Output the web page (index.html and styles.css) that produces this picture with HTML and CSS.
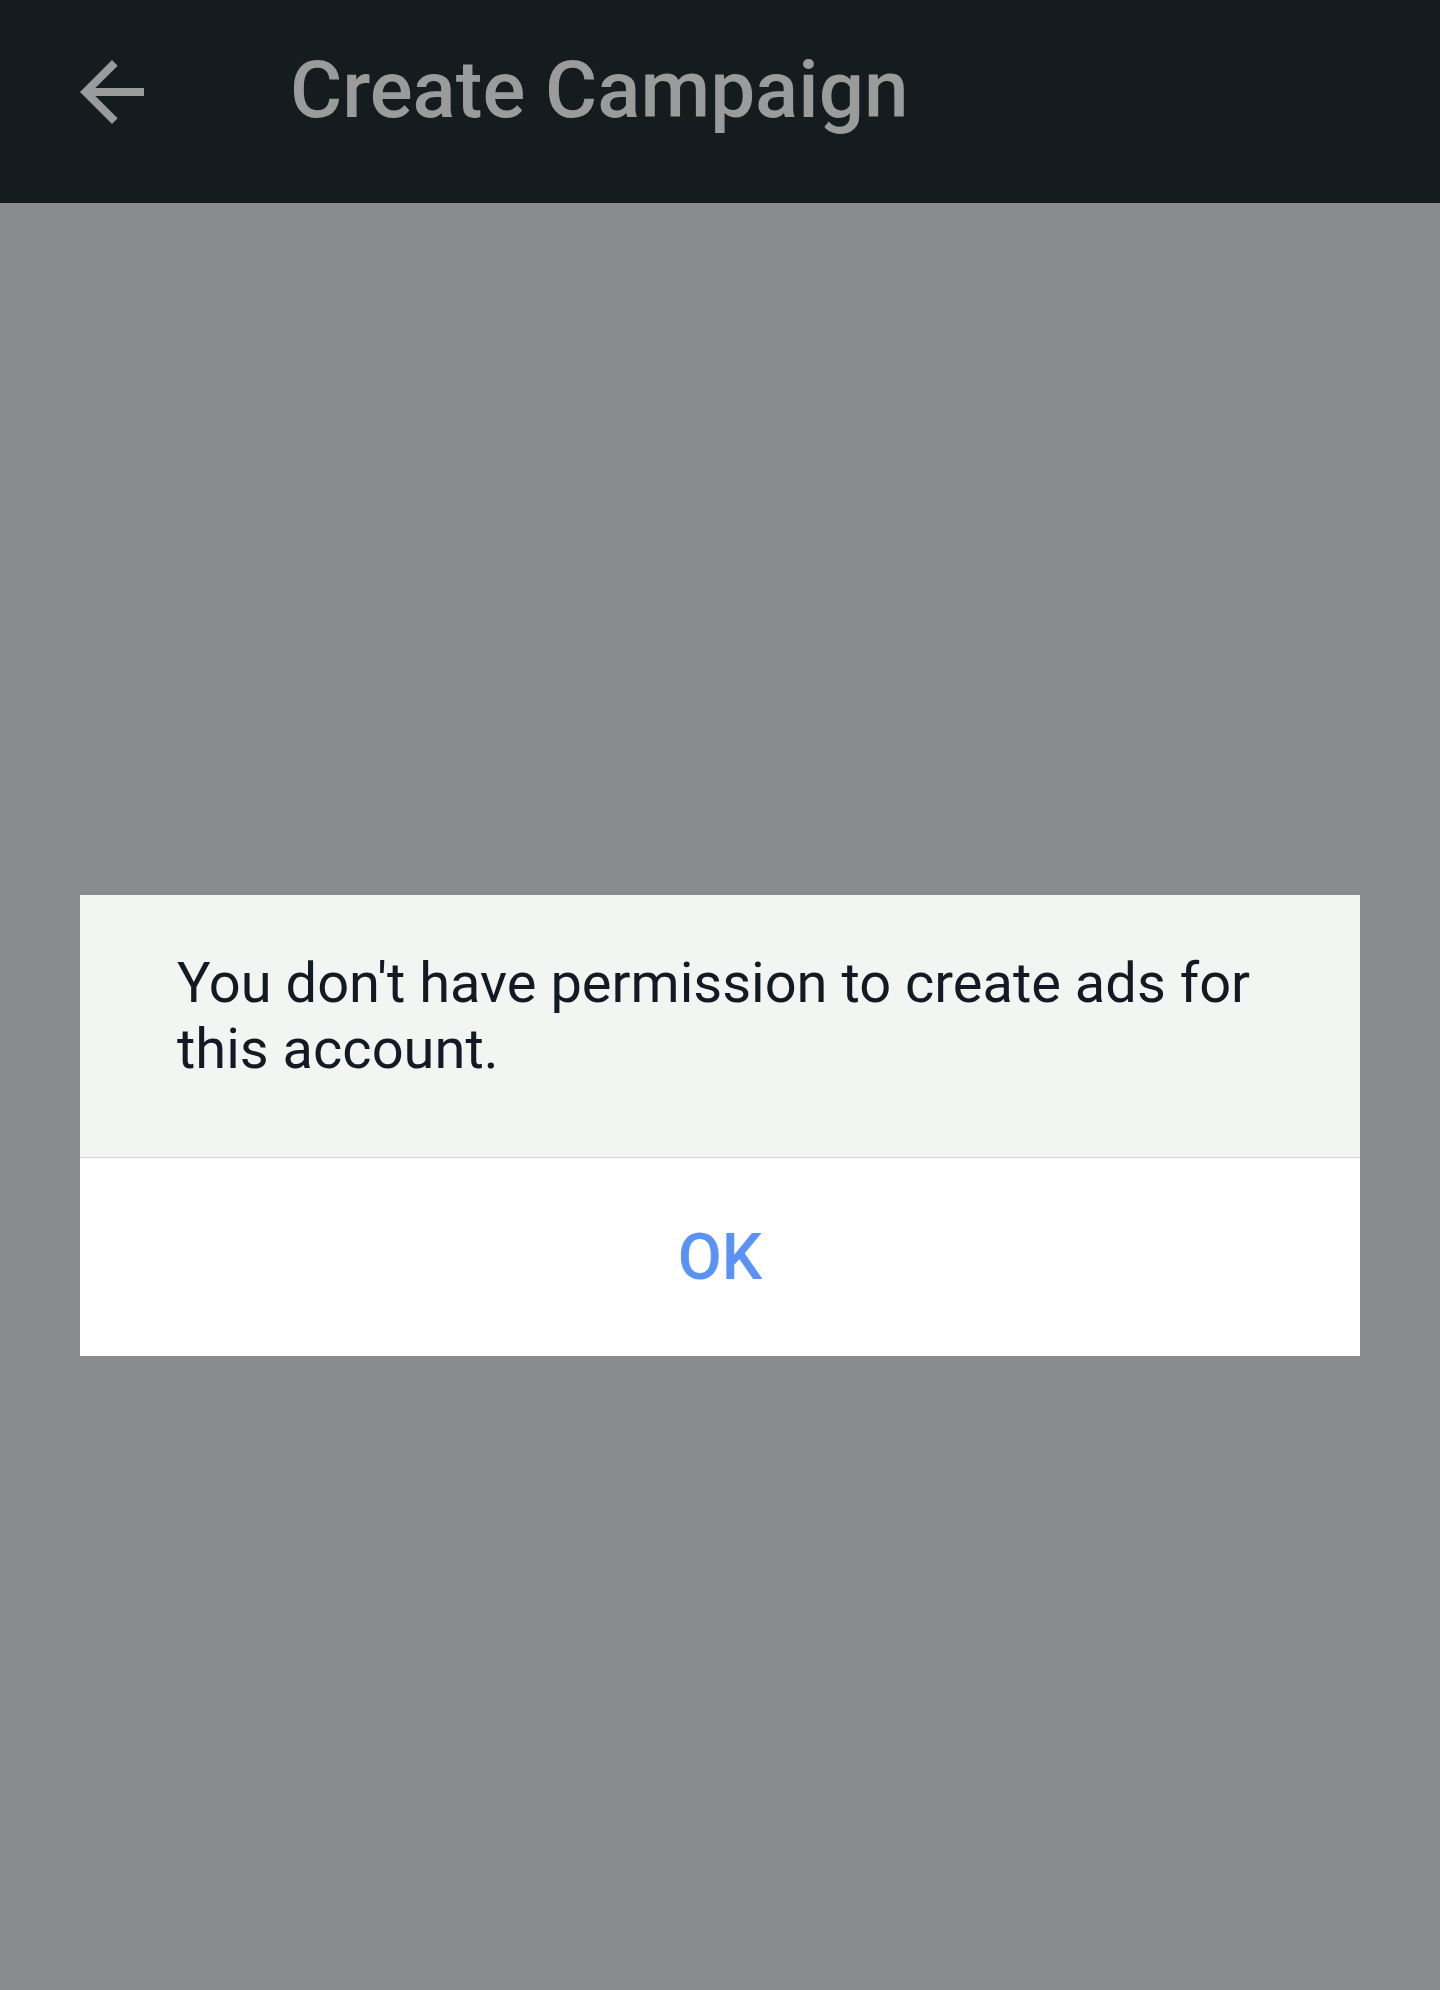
FILE: index.html
```html
<!DOCTYPE html>
<html>
  <head>
    <meta charset="utf-8">
    <title>Create Campaign</title>
    <link rel="stylesheet" href="styles.css">
  </head>
  <body>
    <header class="topbar">
      <button class="back_btn" aria-label="Back">
        <svg width="64" height="64" viewBox="4 4 16 16">
          <path d="M20 11H7.83l5.59-5.59L12 4l-8 8 8 8 1.41-1.41L7.83 13H20v-2z" fill="#9a9b9b"/>
        </svg>
      </button>
      <h1>Create Campaign</h1>
    </header>

    <main class="scrim">
      <div class="dialog">
        <p class="dialog_msg">You don't have permission to create ads for this account.</p>
        <button class="dialog_ok">OK</button>
      </div>
    </main>
  </body>
</html>
```
FILE: styles.css
```css
body {
  margin: 0;
  font-family: Roboto, "Noto Sans", sans-serif;
  background-color: #8a8b8d;
  height: 1990px;
  display: flex;
  flex-direction: column;
}

.topbar {
  height: 203px;
  background-color: #151c1f;
  display: flex;
  align-items: center;
  padding-left: 80px;
  box-sizing: border-box;
  flex-shrink: 0;
}

.back_btn {
  background: none;
  border: 0;
  padding: 0;
  width: 64px;
  height: 64px;
  display: block;
  margin-top: -19px;
}

.back_btn svg {
  display: block;
}

.topbar h1 {
  margin: 0 0 0 146px;
  font-size: 80px;
  font-weight: 500;
  color: #9a9b9b;
  margin-top: -24px;
}

.scrim {
  flex: 1;
  padding-top: 692px;
}

.dialog {
  width: 1280px;
  margin: 0 auto 0 80px;
}

.dialog_msg {
  margin: 0;
  background-color: #f3f5f3;
  padding: 55px 96px 75px 97px;
  font-size: 56px;
  line-height: 66px;
  color: #141a24;
  border-bottom: 1px solid #d2d4d4;
}

.dialog_ok {
  display: block;
  width: 100%;
  height: 198px;
  border: 0;
  background-color: #fff;
  font-family: Roboto, sans-serif;
  font-size: 64px;
  font-weight: 500;
  color: #5b93f5;
}
```
